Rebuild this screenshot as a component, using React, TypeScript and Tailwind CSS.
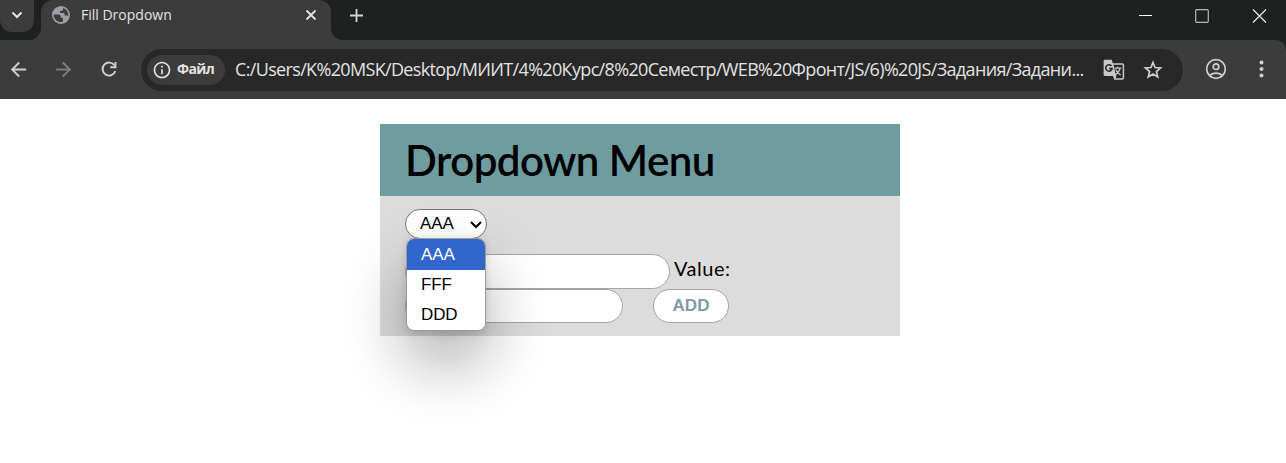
import type { ReactNode } from 'react';
import { MdArrowBack, MdArrowForward, MdOutlineInfo } from 'react-icons/md';

function GlobeIcon() {
  return (
    <svg width="20" height="20" viewBox="0 0 20 20" className="shrink-0">
      <circle cx="10" cy="10" r="9" fill="#9aa0a6" />
      <path
        d="M2.600 9.500h4.600c1.600 0 2.600.9 2.600 2.300v1h2.100v3.900A7.200 7.200 0 0 1 2.600 9.500ZM12 3v1.600c0 .8-.6 1.400-1.500 1.400H9v1.900h3.100c1 0 1.500.7 1.500 1.700v1h1.700c.8 0 1.500.4 1.800 1A7.300 7.300 0 0 0 12 3Z"
        fill="#3c3c3c"
      />
    </svg>
  );
}

function ReloadIcon() {
  return (
    <svg className="ml-[25px] shrink-0" width="18" height="18" viewBox="0 0 18 18" fill="none" stroke="#d0d0d0" strokeWidth="1.900">
      <path d="M14.600 5.600A6.500 6.500 0 1 0 15.300 11" />
      <path d="M15.500 2v5.200h-5.200" />
    </svg>
  );
}

function TranslateIcon() {
  return (
    <svg className="ml-[7px] shrink-0" width="22" height="22" viewBox="0 0 22 22">
      <path d="M9.500 4.900h9.700c.7 0 1.200.5 1.200 1.200v12.700c0 .7-.5 1.200-1.200 1.200h-7.500L9.500 4.900Z" fill="none" stroke="#c7c7c7" strokeWidth="1.500" />
      <path d="M2 .7h6.800l4.500 16.300H2c-.8 0-1.400-.6-1.400-1.400V2.100C.6 1.300 1.200.7 2 .7Z" fill="#c7c7c7" />
      <path d="m9.900 17 2.400 3.400 1.100-3.400z" fill="#c7c7c7" />
      <path d="M8.400 6.900A3.200 3.200 0 1 0 9.100 9.500H6" fill="none" stroke="#282828" strokeWidth="1.500" />
      <path d="M11.300 9.200h7M14.700 7.700v1.500M17.200 9.200c-.5 2.500-2 4.500-4.300 6.200M12.700 10.500c.8 2.100 2.500 4 4.900 5.500" fill="none" stroke="#c7c7c7" strokeWidth="1.300" />
    </svg>
  );
}

function StarIcon() {
  return (
    <svg className="ml-[18px] shrink-0" width="20" height="20" viewBox="0 0 20 20" fill="none" stroke="#d0d0d0" strokeWidth="1.700">
      <path d="m10 2.500 2.100 5 5.500.5-4.200 3.600 1.300 5.400-4.700-2.900L5.300 17l1.300-5.400L2.400 8l5.500-.5z" />
    </svg>
  );
}

function AccountIcon() {
  return (
    <svg className="ml-[22px] shrink-0" width="22" height="22" viewBox="0 0 22 22" fill="none" stroke="#d0d0d0" strokeWidth="1.700">
      <circle cx="11" cy="11" r="9.300" />
      <circle cx="11" cy="8.700" r="2.800" />
      <path d="M4.600 17.200c3.800-2.500 9-2.500 12.800 0" />
    </svg>
  );
}

function TabStrip() {
  return (
    <div className="flex h-10 items-start bg-[#1f2120]">
      <div className="h-10 w-[41px] shrink-0 bg-[#3c3c3c]">
        <div className="flex h-10 w-[41px] items-start rounded-br-xl bg-[#1f2120]">
          <div className="flex h-8 w-[34px] items-center justify-center rounded-b-xl bg-[#3c3c3c] pb-[3px]">
            <svg width="12" height="8" viewBox="0 0 12 8" fill="none" stroke="#e3e3e3" strokeWidth="2">
              <path d="M1.500 1.500 6 6l4.500-4.500" />
            </svg>
          </div>
        </div>
      </div>
      <div className="flex h-10 w-[290px] shrink-0 items-start rounded-t-xl bg-[#3c3c3c] pl-[10px] pr-[14px] pt-[5px]">
        <GlobeIcon />
        <span className="ml-[10px] font-['Open_Sans',sans-serif] text-[14px] leading-5 text-[#e3e3e3]">Fill Dropdown</span>
        <svg className="ml-auto mt-1" width="12" height="12" viewBox="0 0 12 12" stroke="#e3e3e3" strokeWidth="1.800">
          <path d="m1.500 1.500 9 9m0-9-9 9" />
        </svg>
      </div>
      <div className="flex h-10 flex-1 bg-[#3c3c3c]">
        <div className="flex h-10 w-full items-start rounded-bl-xl bg-[#1f2120] pl-[18px]">
          <svg className="mt-2" width="15" height="15" viewBox="0 0 15 15" stroke="#d4d4d4" strokeWidth="1.800">
            <path d="M7.500 1v13M1 7.500h13" />
          </svg>
          <div className="ml-auto mr-[19px] mt-[9px] flex items-start">
            <svg width="14" height="14" stroke="#fff" strokeWidth="1">
              <path d="M1 6.500h13" />
            </svg>
            <svg className="ml-[43px]" width="14" height="14" fill="none" stroke="#b8b8b8" strokeWidth="1.200">
              <rect x=".7" y=".7" width="12.600" height="12.600" rx="1" />
            </svg>
            <svg className="ml-[43px]" width="15" height="14" stroke="#f0f0f0" strokeWidth="1.100">
              <path d="m1 .5 13 13m0-13-13 13" />
            </svg>
          </div>
        </div>
      </div>
    </div>
  );
}

function Toolbar() {
  return (
    <div className="bg-[#1f2120]">
      <div className="flex h-[59px] items-center rounded-tr-[10px] bg-[#3c3c3c] pb-px pl-[7px]">
        <MdArrowBack className="shrink-0" size={23} color="#d0d0d0" />
        <MdArrowForward className="ml-[22px] shrink-0" size={23} color="#7d7d7d" />
        <ReloadIcon />
        <div className="ml-[23px] mt-px flex h-[42px] w-[1042px] shrink-0 items-center rounded-full bg-[#282828] pl-[6px]">
          <div className="flex h-[30px] w-[78px] shrink-0 items-center rounded-full bg-[#3c3c3c] pl-[5px]">
            <MdOutlineInfo className="shrink-0" size={20} color="#e3e3e3" />
            <span className="-mt-px ml-[5px] whitespace-nowrap font-['Open_Sans',sans-serif] text-[14px] font-bold leading-5 tracking-[-0.65px] text-[#e3e3e3]">
              Файл
            </span>
          </div>
          <span className="-mt-px ml-[10px] w-[861px] shrink-0 whitespace-nowrap font-['Open_Sans',sans-serif] text-[18px] leading-6 tracking-[-0.66px] text-[#e3e3e3]">
            C:/Users/K%20MSK/Desktop/МИИТ/4%20Курс/8%20Семестр/WEB%20Фронт/JS/6)%20JS/Задания/Задани...
          </span>
          <TranslateIcon />
          <StarIcon />
        </div>
        <AccountIcon />
        <svg className="ml-[32px] shrink-0" width="5" height="18" fill="#d0d0d0">
          <circle cx="2.500" cy="2.500" r="2" />
          <circle cx="2.500" cy="9" r="2" />
          <circle cx="2.500" cy="15.500" r="2" />
        </svg>
      </div>
    </div>
  );
}

function Option({ children, selected = false }: { children: ReactNode; selected?: boolean }) {
  return (
    <li
      role="option"
      aria-selected={selected}
      className={
        selected
          ? 'flex h-[31px] items-center bg-[#3166cd] pl-[14px] text-white'
          : 'flex h-[30px] items-center pb-px pl-[14px] text-black'
      }
    >
      {children}
    </li>
  );
}

function Select() {
  return (
    <div className="relative w-[82px] font-['Liberation_Sans',sans-serif] text-[17px] leading-5 tracking-[-0.1px]">
      <button className="flex h-[30px] w-full items-center justify-between rounded-full border border-[#767676] bg-white pb-px pl-[14px] pr-[4px]">
        <span>AAA</span>
        <svg className="mt-[3px]" width="12" height="8" viewBox="0 0 12 8" fill="none" stroke="#000" strokeWidth="2">
          <path d="m1 1 5 5 5-5" />
        </svg>
      </button>
      <ul
        role="listbox"
        className="absolute left-px top-[29px] z-10 w-20 overflow-hidden rounded-lg border border-[#999] bg-white shadow-[0_2px_8px_rgba(0,0,0,0.12),0_32px_64px_rgba(0,0,0,0.33)]"
      >
        <Option selected>AAA</Option>
        <Option>FFF</Option>
        <Option>DDD</Option>
      </ul>
    </div>
  );
}

export default function App() {
  return (
    <div className="h-[463px] w-[1286px] overflow-hidden bg-white">
      <TabStrip />
      <Toolbar />
      <main className="ml-[380px] mt-[25px] w-[520px]">
        <header className="flex h-[72px] items-center bg-[#6f9c9e] pl-[25px]">
          <h1 className="whitespace-nowrap font-['Lato',sans-serif] text-[42px] font-semibold leading-[50px] tracking-[-0.55px] text-black">
            Dropdown Menu
          </h1>
        </header>
        <section className="h-[140px] bg-[#dcdcdc] pl-[25px] pt-[13px]">
          <Select />
          <div className="mt-[15px] flex h-[35px]">
            <input className="h-[35px] w-[265px] rounded-full border border-[#a5a5a5] bg-white" />
            <label className="ml-1 mt-[2px] font-['Lato',sans-serif] text-[20px] leading-6 tracking-[0.5px] text-black">
              Value:
            </label>
          </div>
          <div className="flex h-[34px]">
            <input className="h-[34px] w-[218px] rounded-full border border-[#a5a5a5] bg-white" />
            <button className="ml-[30px] h-[34px] w-[76px] rounded-full border border-[#a5a5a5] bg-white font-['Liberation_Sans',sans-serif] text-[17px] font-bold leading-5 text-[#7f9aa8]">
              ADD
            </button>
          </div>
        </section>
      </main>
    </div>
  );
}
